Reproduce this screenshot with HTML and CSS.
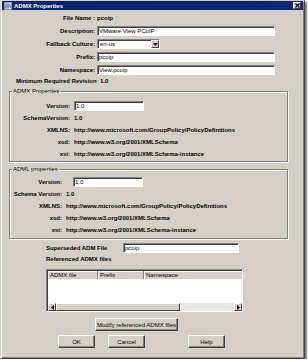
FILE: index.html
```html
<!DOCTYPE html>
<html lang="en">
<head>
    <meta charset="UTF-8">
    <title>ADMX Properties</title>
    <link rel="stylesheet" href="styles.css">
</head>
<body>
    <div class="window">
        <div class="titlebar">
            <svg class="app-icon" width="8" height="8" viewBox="0 0 8 8">
                <rect x="0.5" y="0.5" width="7" height="7" fill="#e8e8f0" stroke="#8090c0"/>
                <path d="M2 1.5v5M4 1.5v5M5.5 2.5l1 3" stroke="#2040a0" stroke-width="1"/>
            </svg>
            <span class="title">ADMX Properties</span>
            <span class="close-btn">
                <svg width="5" height="5" viewBox="0 0 5 5"><path d="M0.5 0.5l4 4M4.5 0.5l-4 4" stroke="#000" stroke-width="1.2"/></svg>
            </span>
        </div>

        <div class="top-form">
            <span class="label">File Name :</span>
            <span class="value">pcoip</span>

            <label class="label" for="description">Description:</label>
            <input class="field" type="text" id="description" value="VMware View PCoIP">

            <label class="label" for="culture">Fallback Culture:</label>
            <div class="select">
                <span class="select-text">en-us</span>
                <span class="select-arrow">
                    <svg width="5" height="3" viewBox="0 0 5 3"><path d="M0 0h5L2.5 3z" fill="#000"/></svg>
                </span>
            </div>

            <label class="label" for="prefix">Prefix:</label>
            <input class="field" type="text" id="prefix" value="pcoip">

            <label class="label" for="namespace">Namespace:</label>
            <input class="field" type="text" id="namespace" value="View.pcoip">
        </div>

        <div class="min-revision">Minimum Required Revision&nbsp;&nbsp;1.0</div>

        <fieldset class="group admx">
            <legend>ADMX Properties</legend>
            <div class="group-grid">
                <label class="label" for="admxVersion">Version:</label>
                <input class="field small" type="text" id="admxVersion" value="1.0">

                <span class="label">SchemaVersion:</span>
                <span class="value">1.0</span>

                <span class="label">XMLNS:</span>
                <span class="value">http://www.microsoft.com/GroupPolicy/PolicyDefinitions</span>

                <span class="label">xsd:</span>
                <span class="value">http://www.w3.org/2001/XMLSchema</span>

                <span class="label">xsi:</span>
                <span class="value">http://www.w3.org/2001/XMLSchema-instance</span>
            </div>
        </fieldset>

        <fieldset class="group adml">
            <legend>ADML properties</legend>
            <div class="group-grid">
                <label class="label" for="admlVersion">Version:</label>
                <input class="field small shifted" type="text" id="admlVersion" value="1.0">

                <span class="label">Schema Version:</span>
                <span class="value">1.0</span>

                <span class="label">XMLNS:</span>
                <span class="value">http://www.microsoft.com/GroupPolicy/PolicyDefinitions</span>

                <span class="label">xsd:</span>
                <span class="value">http://www.w3.org/2001/XMLSchema</span>

                <span class="label">xsi:</span>
                <span class="value">http://www.w3.org/2001/XMLSchema-instance</span>
            </div>
        </fieldset>

        <div class="superseded">
            <label class="label left" for="superseded">Superseded ADM File</label>
            <input class="field" type="text" id="superseded" value="pcoip">
        </div>

        <div class="ref-title">Referenced ADMX files</div>

        <div class="listview">
            <div class="list-header">
                <span class="col col-file">ADMX file</span>
                <span class="col col-prefix">Prefix</span>
                <span class="col col-ns">Namespace</span>
            </div>
            <div class="list-body"></div>
            <div class="hscroll">
                <span class="sb-btn">
                    <svg width="3" height="5" viewBox="0 0 3 5"><path d="M3 0v5L0 2.5z" fill="#000"/></svg>
                </span>
                <span class="sb-thumb"></span>
                <span class="sb-track"></span>
                <span class="sb-btn">
                    <svg width="3" height="5" viewBox="0 0 3 5"><path d="M0 0v5L3 2.5z" fill="#000"/></svg>
                </span>
            </div>
        </div>

        <div class="modify-row">
            <button class="btn modify">Modify referenced ADMX files</button>
        </div>

        <div class="dialog-buttons">
            <button class="btn ok">OK</button>
            <button class="btn cancel">Cancel</button>
            <button class="btn help">Help</button>
        </div>
    </div>
</body>
</html>
```

FILE: styles.css
```css
body {
    margin: 0;
    background-color: #fff;
    font-family: "Liberation Sans", Arial, sans-serif;
    font-size: 6px;
    color: #000;
}

.window {
    width: 305px;
    height: 359px;
    box-sizing: border-box;
    background: #d4d0c8;
    border: 1px solid;
    border-color: #d4d0c8 #404040 #404040 #d4d0c8;
    box-shadow: inset 1px 1px 0 #fff, inset -1px -1px 0 #808080, 2px 2px 2px rgba(0, 0, 0, 0.55);
}

.titlebar {
    height: 9px;
    margin: 0 1px;
    background: linear-gradient(to right, #0a246a, #0c2775);
    display: flex;
    align-items: center;
    padding: 0 2px;
}

.app-icon {
    margin-right: 2px;
}

.title {
    color: #fff;
    font-weight: bold;
    font-size: 6px;
    flex: 1;
}

.close-btn {
    width: 8px;
    height: 7px;
    box-sizing: border-box;
    background: #d4d0c8;
    border: 1px solid;
    border-color: #fff #404040 #404040 #fff;
    display: flex;
    align-items: center;
    justify-content: center;
}

.label {
    font-weight: bold;
    text-align: right;
    align-self: center;
    line-height: 8px;
    white-space: nowrap;
}

.label.left {
    text-align: left;
}

.value {
    font-weight: bold;
    align-self: center;
    line-height: 8px;
    white-space: nowrap;
}

.field {
    height: 10px;
    box-sizing: border-box;
    margin: 0;
    padding: 0 1px;
    border: 1px solid;
    border-color: #808080 #fff #fff #808080;
    box-shadow: inset 1px 1px 0 #404040;
    background: #fff;
    font-family: "Liberation Sans", Arial, sans-serif;
    font-size: 6px;
    color: #000;
    outline: none;
}

.top-form {
    display: grid;
    grid-template-columns: 94px 178px;
    grid-auto-rows: 10px;
    column-gap: 2px;
    row-gap: 3px;
    margin-top: 3px;
}

.select {
    width: 63px;
    height: 10px;
    box-sizing: border-box;
    border: 1px solid;
    border-color: #808080 #fff #fff #808080;
    box-shadow: inset 1px 1px 0 #404040;
    background: #fff;
    display: flex;
    align-items: center;
    padding-left: 2px;
}

.select-text {
    flex: 1;
}

.select-arrow {
    width: 8px;
    height: 8px;
    box-sizing: border-box;
    background: #d4d0c8;
    border: 1px solid;
    border-color: #fff #404040 #404040 #fff;
    display: flex;
    align-items: center;
    justify-content: center;
}

.min-revision {
    font-weight: bold;
    line-height: 8px;
    margin-top: 2px;
    padding-left: 15px;
}

.group {
    margin: 2px 0 0 8px;
    width: 279px;
    box-sizing: border-box;
    padding: 0;
    border: 1px solid #808080;
    box-shadow: 1px 1px 0 #fff, inset 1px 1px 0 #fff;
}

.group legend {
    margin-left: 2px;
    padding: 0 1px;
    line-height: 8px;
    color: #000;
}

.group-grid {
    display: grid;
    grid-auto-rows: 10px;
    column-gap: 4px;
    row-gap: 2px;
}

.admx .group-grid {
    grid-template-columns: 60px 1fr;
    padding: 6px 0 2px;
}

.adml {
    margin-top: 3px;
}

.adml .group-grid {
    grid-template-columns: 52px 1fr;
    padding: 4px 0 3px;
}

.field.small {
    width: 70px;
}

.field.shifted {
    margin-left: 7px;
}

.superseded {
    display: grid;
    grid-template-columns: 77px 116px;
    height: 10px;
    margin-top: 4px;
    padding-left: 45px;
}

.ref-title {
    font-weight: bold;
    line-height: 8px;
    margin-top: 2px;
    padding-left: 45px;
}

.listview {
    margin: 6px 0 0 45px;
    width: 197px;
    height: 43px;
    box-sizing: border-box;
    border: 1px solid;
    border-color: #808080 #fff #fff #808080;
    box-shadow: inset 1px 1px 0 #404040;
    background: #fff;
    display: flex;
    flex-direction: column;
    padding: 1px 0 0 1px;
}

.list-header {
    display: flex;
    height: 8px;
}

.col {
    box-sizing: border-box;
    background: #d4d0c8;
    border-right: 1px solid #808080;
    box-shadow: inset 1px 1px 0 #fff;
    line-height: 8px;
    padding-left: 2px;
}

.col-file {
    width: 50px;
}

.col-prefix {
    width: 46px;
}

.col-ns {
    flex: 1;
    border-right: none;
}

.list-body {
    flex: 1;
}

.hscroll {
    display: flex;
    height: 8px;
}

.sb-btn,
.sb-thumb {
    box-sizing: border-box;
    background: #d4d0c8;
    border: 1px solid;
    border-color: #fff #404040 #404040 #fff;
    display: flex;
    align-items: center;
    justify-content: center;
}

.sb-btn {
    width: 8px;
}

.sb-thumb {
    width: 124px;
}

.sb-track {
    flex: 1;
    background: #eae8e3;
}

.btn {
    height: 13px;
    box-sizing: border-box;
    margin: 0;
    padding: 0;
    background: #d4d0c8;
    border: 1px solid;
    border-color: #fff #404040 #404040 #fff;
    box-shadow: inset -1px -1px 0 #808080;
    font-family: "Liberation Sans", Arial, sans-serif;
    font-size: 6px;
    color: #000;
}

.modify-row {
    margin-top: 6px;
    padding-left: 94px;
}

.modify {
    width: 83px;
}

.dialog-buttons {
    display: flex;
    margin-top: 4px;
    padding-left: 57px;
}

.ok,
.cancel,
.help {
    width: 37px;
}

.cancel {
    margin-left: 13px;
}

.help {
    margin-left: 43px;
}
```
